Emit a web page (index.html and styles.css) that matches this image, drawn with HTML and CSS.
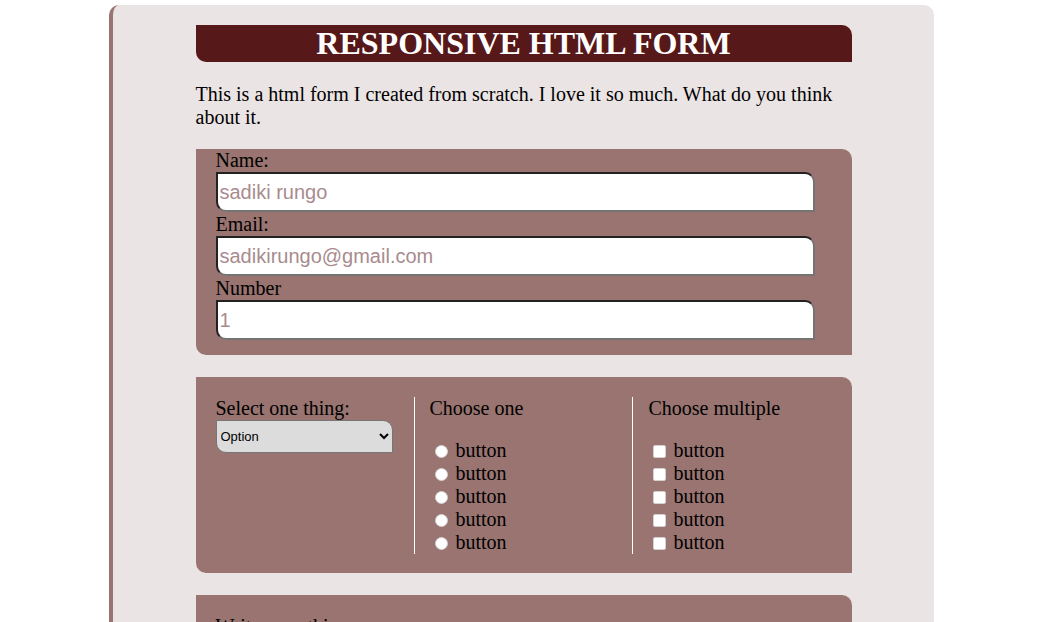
FILE: index.html
```html
<!DOCTYPE html>
<html lang="en">
<head>
<meta charset="utf-8">
<title>Responsive HTML Form</title>
<link rel="stylesheet" href="styles.css">
</head>
<body>
<div class="page">
  <div class="content">
    <h1 class="title">RESPONSIVE HTML FORM</h1>
    <p class="intro">This is a html form I created from scratch. I love it so much. What do you think about it.</p>

    <section class="panel panel-fields">
      <label class="field-label" for="name">Name:</label>
      <input class="text-input" id="name" type="text" placeholder="sadiki rungo">
      <label class="field-label" for="email">Email:</label>
      <input class="text-input" id="email" type="email" placeholder="sadikirungo@gmail.com">
      <label class="field-label" for="num">Number</label>
      <input class="text-input" id="num" type="number" placeholder="1">
    </section>

    <section class="panel panel-choices">
      <div class="col col-select">
        <div class="col-title">Select one thing:</div>
        <select class="select">
          <option>Option</option>
        </select>
      </div>
      <div class="col col-radio">
        <div class="col-title">Choose one</div>
        <div class="options">
          <label class="opt"><input class="radio" type="radio" name="one"> button</label>
          <label class="opt"><input class="radio" type="radio" name="one"> button</label>
          <label class="opt"><input class="radio" type="radio" name="one"> button</label>
          <label class="opt"><input class="radio" type="radio" name="one"> button</label>
          <label class="opt"><input class="radio" type="radio" name="one"> button</label>
        </div>
      </div>
      <div class="col col-check">
        <div class="col-title">Choose multiple</div>
        <div class="options">
          <label class="opt"><input class="check" type="checkbox"> button</label>
          <label class="opt"><input class="check" type="checkbox"> button</label>
          <label class="opt"><input class="check" type="checkbox"> button</label>
          <label class="opt"><input class="check" type="checkbox"> button</label>
          <label class="opt"><input class="check" type="checkbox"> button</label>
        </div>
      </div>
    </section>

    <section class="panel panel-write">
      <label class="field-label" for="msg">Write something:</label>
      <textarea class="textarea" id="msg" rows="6"></textarea>
    </section>
  </div>
</div>
</body>
</html>
```

FILE: styles.css
```css
html, body {
  margin: 0;
  padding: 0;
  background: #ffffff;
}

body {
  font-family: "Liberation Serif", "Times New Roman", serif;
  color: #000;
}

.page {
  margin: 5px 0 0 109px;
  width: 821px;
  border-left: 4px solid #997470;
  border-radius: 10px 10px 0 0;
  background: #ebe4e4;
  padding: 20px 0 40px;
}

.content {
  width: 656px;
  margin: 0 auto;
  display: flex;
  flex-direction: column;
}

.title {
  margin: 0;
  height: 37px;
  line-height: 37px;
  background: #561818;
  color: #ffffff;
  font-size: 32px;
  font-weight: bold;
  text-align: center;
  border-radius: 0 10px 0 10px;
}

.intro {
  margin: 21px 0 20px;
  font-size: 20px;
  line-height: 23px;
}

.panel {
  background: #997470;
  border-radius: 0 10px 0 10px;
  padding: 0 20px 14px;
  margin-bottom: 22px;
}

.panel-fields {
  display: flex;
  flex-direction: column;
  align-items: flex-start;
}

.field-label {
  font-size: 20px;
  line-height: 23px;
  height: 23px;
}

.text-input {
  box-sizing: border-box;
  width: 599px;
  height: 40px;
  margin: 0 0 1px;
  padding: 0 2px;
  font-family: "Liberation Sans", Arial, sans-serif;
  font-size: 20px;
  background: #ffffff;
  border: 2px solid;
  border-color: #222222 #747474 #747474 #222222;
  border-radius: 0 10px 0 10px;
  outline: none;
}

.text-input::placeholder {
  color: #a88b8d;
}

.text-input::-webkit-outer-spin-button,
.text-input::-webkit-inner-spin-button {
  -webkit-appearance: none;
  margin: 0;
}

.panel-choices {
  display: flex;
  padding: 20px 20px 19px;
}

.col {
  box-sizing: border-box;
}

.col-select {
  width: 198px;
}

.col-radio {
  width: 218px;
  border-left: 1px solid #ffffff;
  padding-left: 15px;
}

.col-check {
  flex: 1;
  border-left: 1px solid #ffffff;
  padding-left: 16px;
}

.col-title {
  font-size: 20px;
  line-height: 23px;
  height: 23px;
}

.select {
  width: 177px;
  height: 33px;
  margin: 0;
  font-family: "Liberation Sans", Arial, sans-serif;
  font-size: 13px;
  color: #000;
  background: #dcdcdc;
  border: 1px solid #767676;
  border-radius: 0 10px 0 10px;
}

.options {
  margin-top: 19px;
  display: flex;
  flex-direction: column;
}

.opt {
  font-size: 20px;
  line-height: 23px;
  height: 23px;
}

.radio,
.check {
  -webkit-appearance: none;
  appearance: none;
  box-sizing: border-box;
  width: 13px;
  height: 13px;
  background: #ffffff;
  border: 1px solid #d6d0d0;
  vertical-align: -1px;
}

.radio {
  border-radius: 50%;
  margin: 3px 3px 0 5px;
}

.check {
  border-radius: 2px;
  margin: 3px 3px 0 4px;
}

.panel-write {
  padding-top: 20px;
  display: flex;
  flex-direction: column;
  align-items: flex-start;
}

.textarea {
  box-sizing: border-box;
  width: 598px;
  height: 120px;
  border: 2px solid;
  border-color: #222222 #747474 #747474 #222222;
  border-radius: 0 10px 0 10px;
}
```
